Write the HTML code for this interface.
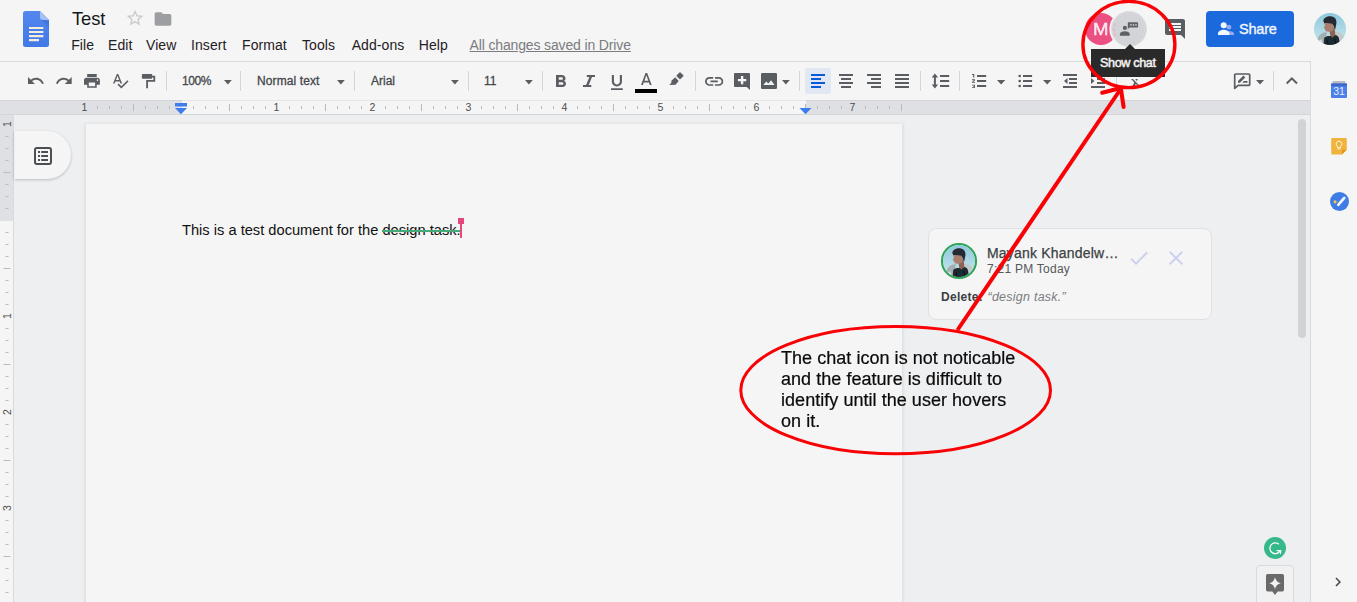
<!DOCTYPE html>
<html lang="en"><head><meta charset="utf-8"><title>Test - Google Docs</title>
<style>
*{box-sizing:border-box;margin:0;padding:0}
html,body{width:1357px;height:602px;overflow:hidden;background:#f5f5f5;font-family:"Liberation Sans",sans-serif;color:#202124}
#app{position:relative;width:1357px;height:602px;overflow:hidden}
.abs{position:absolute}
.ic{position:absolute;display:block;overflow:visible}
.t{position:absolute;white-space:nowrap;line-height:1}
.sep{position:absolute;top:71px;width:1px;height:20px;background:#d3d5d9}
.menu{font-size:14px;color:#1f2023;top:37.500px;letter-spacing:.08px}
.tb{font-size:12px;color:#44474b;top:74.500px;-webkit-text-stroke:.3px #44474b}
</style></head><body><div id="app">
<div class="abs" style="left:0;top:115px;width:1310px;height:487px;background:#eeeff1"></div>
<div class="abs" style="left:0;top:61px;width:1310px;height:1px;background:#d9dadc"></div>
<div class="abs" style="left:1310px;top:61px;width:1px;height:541px;background:#d9dadc"></div>
<svg class="ic" style="left:23px;top:11px" width="26" height="36" viewBox="0 0 26 36">
<defs><linearGradient id="lg" x1="0" y1="0" x2="0" y2="1"><stop offset="0" stop-color="#5487ee"/><stop offset="1" stop-color="#4079e6"/></linearGradient></defs>
<path d="M2.500 0H17l9 9v24.500a2.500 2.500 0 0 1-2.500 2.500h-21A2.500 2.500 0 0 1 0 33.500v-31A2.500 2.500 0 0 1 2.500 0z" fill="url(#lg)"/>
<path d="M17.500 8.500L26 9.200V16z" fill="#3a6fd6" opacity=".6"/>
<path d="M17 0l9 9h-6.500A2.500 2.500 0 0 1 17 6.500z" fill="#a4c0f6"/>
<path d="M6 16h14.400v2.100H6zM6 20h14.400v2.100H6zM6 24.100h14.400v2.100H6zM6 28.100h10v2.100H6z" fill="#f5ecdc"/>
</svg>
<div class="t" style="left:72px;top:9.700px;font-size:18.400px;letter-spacing:-.12px;color:#17181a">Test</div>
<svg class="ic" style="left:125px;top:8.2px" width="20" height="20" viewBox="0 0 24 24"><path fill="#c9cacc" d="M22 9.240l-7.190-.620L12 2 9.190 8.630 2 9.240l5.460 4.730L5.820 21 12 17.270 18.180 21l-1.630-7.030L22 9.240zM12 15.400l-3.760 2.270 1-4.280-3.320-2.880 4.380-.380L12 6.100l1.710 4.040 4.380.380-3.320 2.880 1 4.280L12 15.400z"/></svg>
<svg class="ic" style="left:153px;top:9px" width="20" height="20" viewBox="0 0 24 24"><path fill="#9d9ea1" d="M10 4H4c-1.100 0-1.990.900-1.990 2L2 18c0 1.100.900 2 2 2h16c1.100 0 2-.900 2-2V8c0-1.100-.900-2-2-2h-8l-2-2z"/></svg>
<div class="t menu" style="left:71.2px">File</div>
<div class="t menu" style="left:108px">Edit</div>
<div class="t menu" style="left:146px">View</div>
<div class="t menu" style="left:191px">Insert</div>
<div class="t menu" style="left:242px">Format</div>
<div class="t menu" style="left:302px">Tools</div>
<div class="t menu" style="left:351.7px">Add-ons</div>
<div class="t menu" style="left:418.7px">Help</div>
<div class="t menu" style="left:469.500px;color:#7a7c80;text-decoration:underline;letter-spacing:-.14px">All changes saved in Drive</div>
<svg class="ic" style="left:28px;top:77.2px" width="15.8" height="7.1" viewBox="2 7 20.47 9" preserveAspectRatio="none"><path fill="#5a5d62" d="M12.5 8c-2.65 0-5.05.99-6.9 2.6L2 7v9h9l-3.62-3.62c1.39-1.16 3.16-1.88 5.12-1.88 3.54 0 6.55 2.31 7.6 5.5l2.37-.78C21.08 11.03 17.15 8 12.5 8z"/></svg>
<svg class="ic" style="left:56.3px;top:77.2px" width="15.7" height="7.1" viewBox="1.54 7 20.46 9" preserveAspectRatio="none"><path fill="#5a5d62" d="M18.4 10.6C16.55 8.99 14.15 8 11.5 8c-4.65 0-8.58 3.03-9.96 7.22L3.9 16c1.05-3.19 4.05-5.5 7.6-5.5 1.95 0 3.73.72 5.12 1.88L13 16h9V7l-3.6 3.6z"/></svg>
<svg class="ic" style="left:83.9px;top:74.1px" width="15.9" height="13.8" viewBox="2 3 20 18" preserveAspectRatio="none"><path fill="#5a5d62" d="M19 8H5c-1.66 0-3 1.34-3 3v6h4v4h12v-4h4v-6c0-1.66-1.34-3-3-3zm-3 11H8v-5h8v5zm3-7c-.55 0-1-.45-1-1s.45-1 1-1 1 .45 1 1-.45 1-1 1zm-1-9H6v4h12V3z"/></svg>
<svg class="ic" style="left:112.8px;top:74.4px" width="15.5" height="14.4" viewBox="2.46 3 20.54 19.5" preserveAspectRatio="none"><path fill="#5a5d62" d="M12.45 16h2.09L9.43 3H7.57L2.46 16h2.09l1.12-3h5.64l1.14 3zm-6.02-5L8.5 5.48 10.57 11H6.43zm15.16.59l-8.09 8.09L9.83 16l-1.41 1.41 5.09 5.09L23 13l-1.41-1.41z"/></svg>
<svg class="ic" style="left:141px;top:73px" width="16" height="16" viewBox="141 73 16 16"><rect x="141.900" y="74.100" width="10.300" height="4.700" rx=".7" fill="#5a5d62"/><path fill="none" stroke="#5a5d62" stroke-width="1.800" d="M152 76.600h2.300v4.300h-7.200v7.300"/></svg>
<div class="sep" style="left:166px"></div>
<div class="sep" style="left:240px"></div>
<div class="sep" style="left:354px"></div>
<div class="sep" style="left:468px"></div>
<div class="sep" style="left:542px"></div>
<div class="sep" style="left:695px"></div>
<div class="sep" style="left:799px"></div>
<div class="sep" style="left:920px"></div>
<div class="sep" style="left:959px"></div>
<div class="sep" style="left:1116px"></div>
<div class="sep" style="left:1273px"></div>
<div class="t tb" style="left:182px;letter-spacing:-.45px">100%</div>
<svg class="ic" style="left:224.2px;top:80px" width="7.8" height="4.4" viewBox="0 0 10 5" preserveAspectRatio="none"><path fill="#5a5d62" d="M0 0h10L5 5z"/></svg>
<div class="t tb" style="left:257px;letter-spacing:.1px">Normal text</div>
<svg class="ic" style="left:337.2px;top:80px" width="7.8" height="4.4" viewBox="0 0 10 5" preserveAspectRatio="none"><path fill="#5a5d62" d="M0 0h10L5 5z"/></svg>
<div class="t tb" style="left:371px">Arial</div>
<svg class="ic" style="left:451.2px;top:80px" width="7.8" height="4.4" viewBox="0 0 10 5" preserveAspectRatio="none"><path fill="#5a5d62" d="M0 0h10L5 5z"/></svg>
<div class="t tb" style="left:484px">11</div>
<svg class="ic" style="left:525.2px;top:80px" width="7.8" height="4.4" viewBox="0 0 10 5" preserveAspectRatio="none"><path fill="#5a5d62" d="M0 0h10L5 5z"/></svg>
<svg class="ic" style="left:555.7px;top:75px" width="10" height="12" viewBox="7 4 10.75 14" preserveAspectRatio="none"><path fill="#5a5d62" d="M15.6 10.79c.97-.67 1.65-1.77 1.65-2.79 0-2.26-1.75-4-4-4H7v14h7.04c2.09 0 3.71-1.7 3.71-3.79 0-1.52-.86-2.82-2.15-3.42zM10 6.5h3c.83 0 1.5.67 1.5 1.5s-.67 1.5-1.5 1.5h-3v-3zm3.5 9H10v-3h3.5c.83 0 1.5.67 1.5 1.500s-.67 1.500-1.500 1.500z"/></svg>
<svg class="ic" style="left:582px;top:74px" width="14" height="14" viewBox="0 0 14 14"><path fill="#5a5d62" d="M4.800 1h8.200v2h-3l-3.300 8h2.600v2H1v-2h3.100l3.300-8H4.800z"/></svg>
<svg class="ic" style="left:611.1px;top:75px" width="11.8" height="14.9" viewBox="5 3 14 18" preserveAspectRatio="none"><path fill="#5a5d62" d="M12 17c3.31 0 6-2.69 6-6V3h-2.5v8c0 1.930-1.570 3.500-3.500 3.500S8.500 12.930 8.500 11V3H6v8c0 3.310 2.690 6 6 6zm-7 2v2h14v-2H5z"/></svg>
<svg class="ic" style="left:640.6px;top:73px" width="10.7" height="12.1" viewBox="5.5 3 12.99 14" preserveAspectRatio="none"><path fill="#5a5d62" d="M11 3L5.5 17h2.25l1.120-3h6.250l1.120 3h2.250L13 3h-2zm-1.380 9L12 5.670 14.380 12H9.620z"/></svg>
<div class="abs" style="left:635px;top:89px;width:22px;height:4px;background:#000"></div>
<svg class="ic" style="left:668px;top:71px" width="17" height="15" viewBox="668 71 17 15"><path fill="#5a5d62" d="M679.500 72.500a.7.7 0 0 1 1 0l2.800 2.800a.7.7 0 0 1 0 1l-2.800 2.800a.7.700 0 0 1-1 0l-2.800-2.800a.7.700 0 0 1 0-1zM675.200 77.300L678.700 81 675.500 84.700 669.200 84.900 671.400 82.800 671.400 80.800z"/></svg>
<svg class="ic" style="left:704.9px;top:76.6px" width="18.3" height="8.8" viewBox="2 7 20 10" preserveAspectRatio="none"><path fill="#5a5d62" d="M3.9 12c0-1.710 1.390-3.100 3.100-3.100h4V7H7c-2.760 0-5 2.240-5 5s2.240 5 5 5h4v-1.900H7c-1.710 0-3.100-1.390-3.100-3.100zM8 13h8v-2H8v2zm9-6h-4v1.900h4c1.710 0 3.100 1.390 3.100 3.100s-1.390 3.100-3.100 3.100h-4V17h4c2.760 0 5-2.240 5-5s-2.240-5-5-5z"/></svg>
<svg class="ic" style="left:734px;top:73px" width="16" height="17" viewBox="734 73 16 17"><path fill="#5a5d62" d="M735 73h14a1 1 0 0 1 1 1v15.900l-3.200-3H735a1 1 0 0 1-1-1V74a1 1 0 0 1 1-1z"/><path fill="#f5f5f5" d="M737.900 78.900h8.400v2.300h-8.400zM740.900 75.900h2.400v8.300h-2.400z"/></svg>
<svg class="ic" style="left:761px;top:73px" width="16" height="16" viewBox="761 73 16 16"><rect x="761" y="73" width="16" height="16" rx="1.200" fill="#5a5d62"/><path fill="#f5f5f5" d="M763.400 85L766.200 81.500 768.300 83.400 771.100 80.300 774.500 85z"/></svg>
<svg class="ic" style="left:782.3px;top:80px" width="7.8" height="4.4" viewBox="0 0 10 5" preserveAspectRatio="none"><path fill="#5a5d62" d="M0 0h10L5 5z"/></svg>
<div class="abs" style="left:805px;top:68px;width:26px;height:26px;background:#e1e7f3;border-radius:2px"></div>
<svg class="ic" style="left:811px;top:74px" width="14" height="14" viewBox="0 0 14 14"><rect x="0" y="0" width="14" height="2" fill="#0f5bd7"/><rect x="0" y="4" width="10" height="2" fill="#0f5bd7"/><rect x="0" y="8" width="14" height="2" fill="#0f5bd7"/><rect x="0" y="12" width="10" height="2" fill="#0f5bd7"/></svg>
<svg class="ic" style="left:839px;top:74px" width="14" height="14" viewBox="0 0 14 14"><rect x="0" y="0" width="14" height="2" fill="#5a5d62"/><rect x="2" y="4" width="10" height="2" fill="#5a5d62"/><rect x="0" y="8" width="14" height="2" fill="#5a5d62"/><rect x="2" y="12" width="10" height="2" fill="#5a5d62"/></svg>
<svg class="ic" style="left:867px;top:74px" width="14" height="14" viewBox="0 0 14 14"><rect x="0" y="0" width="14" height="2" fill="#5a5d62"/><rect x="4" y="4" width="10" height="2" fill="#5a5d62"/><rect x="0" y="8" width="14" height="2" fill="#5a5d62"/><rect x="4" y="12" width="10" height="2" fill="#5a5d62"/></svg>
<svg class="ic" style="left:895px;top:74px" width="14" height="14" viewBox="0 0 14 14"><rect x="0" y="0" width="14" height="2" fill="#5a5d62"/><rect x="0" y="4" width="14" height="2" fill="#5a5d62"/><rect x="0" y="8" width="14" height="2" fill="#5a5d62"/><rect x="0" y="12" width="14" height="2" fill="#5a5d62"/></svg>
<svg class="ic" style="left:931px;top:73px" width="8" height="16" viewBox="931 73 8 16"><path fill="#5a5d62" d="M934.900 73.600L938.100 77.500H935.900V84.500H938.100L934.900 88.400 931.700 84.500H933.900V77.500H931.700z"/></svg>
<svg class="ic" style="left:940px;top:75px" width="9.2" height="12" viewBox="0 0 9.2 12"><rect x="0" y="0" width="9.2" height="2" fill="#5a5d62"/><rect x="0" y="5" width="9.2" height="2" fill="#5a5d62"/><rect x="0" y="10" width="9.2" height="2" fill="#5a5d62"/></svg>
<svg class="ic" style="left:971.600px;top:73.800px;overflow:hidden" width="3.400" height="14.200" viewBox="2 4 3 16" preserveAspectRatio="none"><path fill="#5a5d62" d="M2 17h2v.500H3v1h1v.500H2v1h3v-4H2v1zm1-9h1V4H2v1h1v3zm-1 3h1.800L2 13.100v.900h3v-1H3.200L5 10.900V10H2v1zm5-6v2h14V5H7zm0 14h14v-2H7v2zm0-6h14v-2H7v2z"/></svg>
<svg class="ic" style="left:976.8px;top:75px" width="9.2" height="12" viewBox="0 0 9.2 12"><rect x="0" y="0" width="9.2" height="2" fill="#5a5d62"/><rect x="0" y="5" width="9.2" height="2" fill="#5a5d62"/><rect x="0" y="10" width="9.2" height="2" fill="#5a5d62"/></svg>
<svg class="ic" style="left:997px;top:80px" width="8.3" height="4.4" viewBox="0 0 10 5" preserveAspectRatio="none"><path fill="#5a5d62" d="M0 0h10L5 5z"/></svg>
<svg class="ic" style="left:1018px;top:74px" width="4" height="14" viewBox="0 0 4 14"><circle cx="1.700" cy="2" r="1.350" fill="#5a5d62"/><circle cx="1.700" cy="7" r="1.350" fill="#5a5d62"/><circle cx="1.700" cy="12" r="1.350" fill="#5a5d62"/></svg>
<svg class="ic" style="left:1023px;top:75px" width="9.1" height="12" viewBox="0 0 9.1 12"><rect x="0" y="0" width="9.1" height="2" fill="#5a5d62"/><rect x="0" y="5" width="9.1" height="2" fill="#5a5d62"/><rect x="0" y="10" width="9.1" height="2" fill="#5a5d62"/></svg>
<svg class="ic" style="left:1043.1px;top:80px" width="8.4" height="4.4" viewBox="0 0 10 5" preserveAspectRatio="none"><path fill="#5a5d62" d="M0 0h10L5 5z"/></svg>
<svg class="ic" style="left:1063px;top:74px" width="14" height="14" viewBox="0 0 14 14"><rect x="0" y="0" width="14" height="2" fill="#5a5d62"/><rect x="6" y="4" width="8" height="2" fill="#5a5d62"/><rect x="6" y="8" width="8" height="2" fill="#5a5d62"/><rect x="0" y="12" width="14" height="2" fill="#5a5d62"/></svg><svg class="ic" style="left:1063.500px;top:78px" width="3.500" height="6" viewBox="0 0 3.500 6"><path fill="#5a5d62" d="M3.500 0v6L0 3z"/></svg>
<svg class="ic" style="left:1091px;top:74px" width="14" height="14" viewBox="0 0 14 14"><rect x="0" y="0" width="14" height="2" fill="#5a5d62"/><rect x="6" y="4" width="8" height="2" fill="#5a5d62"/><rect x="6" y="8" width="8" height="2" fill="#5a5d62"/><rect x="0" y="12" width="14" height="2" fill="#5a5d62"/></svg><svg class="ic" style="left:1091px;top:78px" width="3.500" height="6" viewBox="0 0 3.500 6"><path fill="#5a5d62" d="M0 0v6l3.500-3z"/></svg>
<div class="abs" style="left:1120px;top:78.500px;width:30px;height:14px;overflow:hidden"><svg class="ic" style="left:9px;top:-2.7px" width="13.5" height="12" viewBox="2 5 18 16" preserveAspectRatio="none"><path fill="#5a5d62" d="M3.270 5L2 6.270l6.970 6.970L6.500 19h3l1.570-3.660L16.730 21 18 19.730 3.550 5.270 3.270 5zM6 5v.180L8.820 8h2.400l-.720 1.680 2.100 2.100L14.210 8H20V5H6z"/></svg></div>
<svg class="ic" style="left:1233px;top:72px" width="18" height="18" viewBox="0 0 18 18"><path fill="none" stroke="#5a5d62" stroke-width="1.700" stroke-linejoin="round" d="M2.700 2h13a1 1 0 0 1 1 1v9.400a1 1 0 0 1-1 1H5.200L1.700 16.400V3a1 1 0 0 1 1-1z"/><path fill="#5a5d62" d="M5 10.800V8.900l5.400-5.400 1.900 1.900-5.400 5.400zM9.200 10.800l1.700-1.700h3.600v1.700z"/></svg>
<svg class="ic" style="left:1256.3px;top:80px" width="8.1" height="4.4" viewBox="0 0 10 5" preserveAspectRatio="none"><path fill="#5a5d62" d="M0 0h10L5 5z"/></svg>
<svg class="ic" style="left:1286.4px;top:77.3px" width="11.7" height="7.2" viewBox="6 8 12 7.41" preserveAspectRatio="none"><path fill="#5a5d62" d="M12 8l-6 6 1.410 1.410L12 10.830l4.590 4.580L18 14z"/></svg>
<div class="abs" style="left:0;top:100px;width:1310px;height:15px;background:#dee0e3"></div>
<div class="abs" style="left:182px;top:100px;width:624px;height:15px;background:#f5f5f5"></div>
<div class="abs" style="left:0;top:114px;width:1310px;height:1px;background:#d3d5d8"></div><div class="abs" style="left:0;top:100px;width:1310px;height:1px;background:rgba(120,125,135,.12)"></div>
<svg class="ic" style="left:0;top:100px" width="1310" height="15" viewBox="0 0 1310 15"><text x="84.5" y="10.700" font-family="Liberation Sans, sans-serif" font-size="10.500" fill="#4a4d51" text-anchor="middle">1</text><rect x="97" y="6" width="1" height="3" fill="#b9bbbf"/><rect x="109" y="6" width="1" height="3" fill="#b9bbbf"/><rect x="121" y="6" width="1" height="3" fill="#b9bbbf"/><rect x="133" y="4" width="1" height="7.200" fill="#b9bbbf"/><rect x="145" y="6" width="1" height="3" fill="#b9bbbf"/><rect x="157" y="6" width="1" height="3" fill="#b9bbbf"/><rect x="169" y="6" width="1" height="3" fill="#b9bbbf"/><rect x="193" y="6" width="1" height="3" fill="#b9bbbf"/><rect x="205" y="6" width="1" height="3" fill="#b9bbbf"/><rect x="217" y="6" width="1" height="3" fill="#b9bbbf"/><rect x="229" y="4" width="1" height="7.200" fill="#b9bbbf"/><rect x="241" y="6" width="1" height="3" fill="#b9bbbf"/><rect x="253" y="6" width="1" height="3" fill="#b9bbbf"/><rect x="265" y="6" width="1" height="3" fill="#b9bbbf"/><text x="276.5" y="10.700" font-family="Liberation Sans, sans-serif" font-size="10.500" fill="#4a4d51" text-anchor="middle">1</text><rect x="289" y="6" width="1" height="3" fill="#b9bbbf"/><rect x="301" y="6" width="1" height="3" fill="#b9bbbf"/><rect x="313" y="6" width="1" height="3" fill="#b9bbbf"/><rect x="325" y="4" width="1" height="7.200" fill="#b9bbbf"/><rect x="337" y="6" width="1" height="3" fill="#b9bbbf"/><rect x="349" y="6" width="1" height="3" fill="#b9bbbf"/><rect x="361" y="6" width="1" height="3" fill="#b9bbbf"/><text x="372.5" y="10.700" font-family="Liberation Sans, sans-serif" font-size="10.500" fill="#4a4d51" text-anchor="middle">2</text><rect x="385" y="6" width="1" height="3" fill="#b9bbbf"/><rect x="397" y="6" width="1" height="3" fill="#b9bbbf"/><rect x="409" y="6" width="1" height="3" fill="#b9bbbf"/><rect x="421" y="4" width="1" height="7.200" fill="#b9bbbf"/><rect x="433" y="6" width="1" height="3" fill="#b9bbbf"/><rect x="445" y="6" width="1" height="3" fill="#b9bbbf"/><rect x="457" y="6" width="1" height="3" fill="#b9bbbf"/><text x="468.5" y="10.700" font-family="Liberation Sans, sans-serif" font-size="10.500" fill="#4a4d51" text-anchor="middle">3</text><rect x="481" y="6" width="1" height="3" fill="#b9bbbf"/><rect x="493" y="6" width="1" height="3" fill="#b9bbbf"/><rect x="505" y="6" width="1" height="3" fill="#b9bbbf"/><rect x="517" y="4" width="1" height="7.200" fill="#b9bbbf"/><rect x="529" y="6" width="1" height="3" fill="#b9bbbf"/><rect x="541" y="6" width="1" height="3" fill="#b9bbbf"/><rect x="553" y="6" width="1" height="3" fill="#b9bbbf"/><text x="564.5" y="10.700" font-family="Liberation Sans, sans-serif" font-size="10.500" fill="#4a4d51" text-anchor="middle">4</text><rect x="577" y="6" width="1" height="3" fill="#b9bbbf"/><rect x="589" y="6" width="1" height="3" fill="#b9bbbf"/><rect x="601" y="6" width="1" height="3" fill="#b9bbbf"/><rect x="613" y="4" width="1" height="7.200" fill="#b9bbbf"/><rect x="625" y="6" width="1" height="3" fill="#b9bbbf"/><rect x="637" y="6" width="1" height="3" fill="#b9bbbf"/><rect x="649" y="6" width="1" height="3" fill="#b9bbbf"/><text x="660.5" y="10.700" font-family="Liberation Sans, sans-serif" font-size="10.500" fill="#4a4d51" text-anchor="middle">5</text><rect x="673" y="6" width="1" height="3" fill="#b9bbbf"/><rect x="685" y="6" width="1" height="3" fill="#b9bbbf"/><rect x="697" y="6" width="1" height="3" fill="#b9bbbf"/><rect x="709" y="4" width="1" height="7.200" fill="#b9bbbf"/><rect x="721" y="6" width="1" height="3" fill="#b9bbbf"/><rect x="733" y="6" width="1" height="3" fill="#b9bbbf"/><rect x="745" y="6" width="1" height="3" fill="#b9bbbf"/><text x="756.5" y="10.700" font-family="Liberation Sans, sans-serif" font-size="10.500" fill="#4a4d51" text-anchor="middle">6</text><rect x="769" y="6" width="1" height="3" fill="#b9bbbf"/><rect x="781" y="6" width="1" height="3" fill="#b9bbbf"/><rect x="793" y="6" width="1" height="3" fill="#b9bbbf"/><rect x="805" y="4" width="1" height="7.200" fill="#b9bbbf"/><rect x="817" y="6" width="1" height="3" fill="#b9bbbf"/><rect x="829" y="6" width="1" height="3" fill="#b9bbbf"/><rect x="841" y="6" width="1" height="3" fill="#b9bbbf"/><text x="852.5" y="10.700" font-family="Liberation Sans, sans-serif" font-size="10.500" fill="#4a4d51" text-anchor="middle">7</text><rect x="865" y="6" width="1" height="3" fill="#b9bbbf"/><rect x="877" y="6" width="1" height="3" fill="#b9bbbf"/><rect x="889" y="6" width="1" height="3" fill="#b9bbbf"/><rect x="901" y="4" width="1" height="7.200" fill="#b9bbbf"/><path d="M175 3h12v3.600h-12zM175 8h12l-6 6.200z" fill="#3f7cf0"/><path d="M799.500 8h12l-6 6.200z" fill="#3f7cf0"/></svg>
<div class="abs" style="left:0;top:115px;width:13px;height:487px;background:#f5f5f5"></div>
<div class="abs" style="left:0;top:115px;width:13px;height:106px;background:#dee0e3"></div>
<div class="abs" style="left:13px;top:115px;width:1px;height:487px;background:#d8dadd"></div>
<svg class="ic" style="left:0;top:115px" width="14" height="487" viewBox="0 0 14 487"><text transform="translate(11,9) rotate(-90)" font-family="Liberation Sans, sans-serif" font-size="10.500" fill="#4a4d51" text-anchor="middle">1</text><rect x="5.500" y="21" width="3" height="1" fill="#b9bbbf"/><rect x="5.500" y="33" width="3" height="1" fill="#b9bbbf"/><rect x="5.500" y="45" width="3" height="1" fill="#b9bbbf"/><rect x="3.500" y="57" width="7" height="1" fill="#b9bbbf"/><rect x="5.500" y="69" width="3" height="1" fill="#b9bbbf"/><rect x="5.500" y="81" width="3" height="1" fill="#b9bbbf"/><rect x="5.500" y="93" width="3" height="1" fill="#b9bbbf"/><rect x="5.500" y="117" width="3" height="1" fill="#b9bbbf"/><rect x="5.500" y="129" width="3" height="1" fill="#b9bbbf"/><rect x="5.500" y="141" width="3" height="1" fill="#b9bbbf"/><rect x="3.500" y="153" width="7" height="1" fill="#b9bbbf"/><rect x="5.500" y="165" width="3" height="1" fill="#b9bbbf"/><rect x="5.500" y="177" width="3" height="1" fill="#b9bbbf"/><rect x="5.500" y="189" width="3" height="1" fill="#b9bbbf"/><text transform="translate(11,201) rotate(-90)" font-family="Liberation Sans, sans-serif" font-size="10.500" fill="#4a4d51" text-anchor="middle">1</text><rect x="5.500" y="213" width="3" height="1" fill="#b9bbbf"/><rect x="5.500" y="225" width="3" height="1" fill="#b9bbbf"/><rect x="5.500" y="237" width="3" height="1" fill="#b9bbbf"/><rect x="3.500" y="249" width="7" height="1" fill="#b9bbbf"/><rect x="5.500" y="261" width="3" height="1" fill="#b9bbbf"/><rect x="5.500" y="273" width="3" height="1" fill="#b9bbbf"/><rect x="5.500" y="285" width="3" height="1" fill="#b9bbbf"/><text transform="translate(11,297) rotate(-90)" font-family="Liberation Sans, sans-serif" font-size="10.500" fill="#4a4d51" text-anchor="middle">2</text><rect x="5.500" y="309" width="3" height="1" fill="#b9bbbf"/><rect x="5.500" y="321" width="3" height="1" fill="#b9bbbf"/><rect x="5.500" y="333" width="3" height="1" fill="#b9bbbf"/><rect x="3.500" y="345" width="7" height="1" fill="#b9bbbf"/><rect x="5.500" y="357" width="3" height="1" fill="#b9bbbf"/><rect x="5.500" y="369" width="3" height="1" fill="#b9bbbf"/><rect x="5.500" y="381" width="3" height="1" fill="#b9bbbf"/><text transform="translate(11,393) rotate(-90)" font-family="Liberation Sans, sans-serif" font-size="10.500" fill="#4a4d51" text-anchor="middle">3</text><rect x="5.500" y="405" width="3" height="1" fill="#b9bbbf"/><rect x="5.500" y="417" width="3" height="1" fill="#b9bbbf"/><rect x="5.500" y="429" width="3" height="1" fill="#b9bbbf"/><rect x="3.500" y="441" width="7" height="1" fill="#b9bbbf"/><rect x="5.500" y="453" width="3" height="1" fill="#b9bbbf"/><rect x="5.500" y="465" width="3" height="1" fill="#b9bbbf"/><rect x="5.500" y="477" width="3" height="1" fill="#b9bbbf"/></svg>
<div class="abs" style="left:86px;top:124px;width:816px;height:490px;background:#f5f5f5;box-shadow:0 1px 3px 1px rgba(60,64,67,.13)"></div>
<div class="t" style="left:182px;top:223px;font-size:14.670px;color:#111">This is a test document for the <span style="position:relative;display:inline-block">design task.<span style="position:absolute;left:0;right:0;top:6.500px;height:2px;background:#45aa78"></span></span></div>
<div class="abs" style="left:460px;top:219px;width:2px;height:19px;background:#e8457a"></div>
<div class="abs" style="left:458px;top:218px;width:6px;height:6px;background:#e8457a"></div>
<div class="abs" style="left:14px;top:131px;width:57px;height:48px;background:#f5f5f5;border-radius:0 24px 24px 0;box-shadow:0 1px 3px rgba(0,0,0,.22)"></div>
<div class="abs" style="left:14px;top:126px;width:1px;height:60px;background:#eeeff1"></div>
<svg class="ic" style="left:34px;top:147px" width="18" height="18" viewBox="0 0 18 18"><rect x="1" y="1" width="16" height="16" rx="1.900" fill="none" stroke="#4c4f54" stroke-width="2"/><path fill="#4c4f54" d="M4 4.100h2v1.800H4zM7.200 4.100h6.800v1.800H7.200zM4 8.100h2v1.800H4zM7.200 8.100h6.800v1.800H7.200zM4 12.100h2v1.800H4zM7.200 12.100h6.800v1.800H7.200z"/></svg>
<div class="abs" style="left:1298px;top:119px;width:8px;height:219px;background:#d2d3d7;border-radius:4px"></div>
<div class="abs" style="left:928px;top:228px;width:284px;height:92px;background:#f5f5f5;border:1px solid #e0e1e4;border-radius:8px"></div>
<svg class="ic" style="left:941px;top:242.800px" width="36" height="36" viewBox="0 0 36 36">
<defs><clipPath id="cp1"><circle cx="16" cy="16" r="16"/></clipPath><linearGradient id="sky" x1="0" y1="0" x2="0" y2="1"><stop offset="0" stop-color="#8ec8dd"/><stop offset=".6" stop-color="#b3dbe6"/><stop offset="1" stop-color="#cfe6ea"/></linearGradient>
<filter id="bl" x="-10%" y="-10%" width="120%" height="120%"><feGaussianBlur stdDeviation=".45"/></filter>
<g id="face"><g clip-path="url(#cp1)"><rect width="32" height="32" fill="url(#sky)"/><g filter="url(#bl)">
<path d="M3.500 26C5 21 9 19.300 13 19.300L12 25 11 32 4 31z" fill="#a4afb2"/><path d="M4 29l3-3 1.500 3L7 32z" fill="#d9dcda"/>
<path d="M20 19.500C24 18 28 20 30 23.500L27.500 28 25 31 22.500 24z" fill="#c3c9c8"/>
<path d="M9.500 32L10.300 24.800C12 23.300 14 22.700 16 23L21 22C23 22 24.500 23.500 25 25.500L26 32z" fill="#1e2a30"/>
<path d="M15.300 16.500L20.500 13.500 21.300 22 18.500 24.500 16.300 23z" fill="#8e6253"/>
<path d="M10.300 9.500C13 9 17 9.500 18.700 11L19.700 15.500C19.200 18 17.200 19.200 15 18.700L11.700 18.300 11 16.300 9.700 14.800 10.900 13z" fill="#a97e6d"/>
<path d="M9.300 8C9.800 4.300 14 2.800 18 3.500 21.600 4.200 23.200 7.500 22.200 11.500L21.200 16.500C20 14.500 19.700 12.200 18.200 10.700 15.200 10.200 12 9.700 10.300 10.300z" fill="#272c30"/>
<path d="M13 27l1 5M21 26l.8 6" stroke="#0f171b" stroke-width="1.200"/>
</g></g></g></defs>
<circle cx="18" cy="18" r="17" fill="none" stroke="#2ea557" stroke-width="2.200"/>
<use href="#face" x="2" y="2"/></svg>
<div class="t" style="left:987px;top:245.500px;font-size:14px;color:#3c4043;letter-spacing:.2px;-webkit-text-stroke:.25px #3c4043">Mayank Khandelw…</div>
<div class="t" style="left:987px;top:263px;font-size:12px;color:#55585c;letter-spacing:.25px">7:21 PM Today</div>
<svg class="ic" style="left:1127.2px;top:245.7px" width="24" height="24" viewBox="0 0 24 24"><path fill="#cdd1ef" d="M9 16.170L4.830 12l-1.420 1.410L9 19 21 7l-1.410-1.410z"/></svg>
<svg class="ic" style="left:1164px;top:246.2px" width="24" height="24" viewBox="0 0 24 24"><path fill="#cdd1ef" d="M19 6.410L17.590 5 12 10.590 6.410 5 5 6.410 10.590 12 5 17.590 6.410 19 12 13.410 17.590 19 19 17.590 13.410 12z"/></svg>
<div class="t" style="left:941px;top:291px;font-size:12px;color:#3c4043"><b style="letter-spacing:.3px">Delete:</b> <i style="color:#7a7d81;font-size:12.500px;letter-spacing:.25px;margin-left:1px">“design task.”</i></div>
<svg class="ic" style="left:1331px;top:81px" width="16" height="17" viewBox="0 0 16 17"><rect x="1.500" y="0" width="13" height="3" rx=".5" fill="#b9bbbf"/><rect x="0" y="2.500" width="16" height="14.500" rx="1" fill="#4a80ea"/><rect x="0" y="2.500" width="16" height="2.500" fill="#3b68c9"/><text x="8" y="14.300" font-family="Liberation Sans, sans-serif" font-size="10.500" fill="#e8effc" text-anchor="middle">31</text></svg>
<svg class="ic" style="left:1331px;top:137.500px" width="16" height="16.500" viewBox="0 0 16 17"><path d="M1 0h14a1 1 0 0 1 1 1v11l-5 5H1a1 1 0 0 1-1-1V1a1 1 0 0 1 1-1z" fill="#f0b43c"/><path d="M16 12l-5 5v-4a1 1 0 0 1 1-1z" fill="#dc981e"/><path d="M8 3.200a3 3 0 0 0-1.600 5.500v1.300h3.200V8.700A3 3 0 0 0 8 3.200z" fill="none" stroke="#fdf6e6" stroke-width="1"/><path d="M6.700 11.300h2.600" stroke="#fdf6e6" stroke-width="1"/></svg>
<svg class="ic" style="left:1330px;top:192px" width="19" height="19" viewBox="0 0 20 20"><circle cx="10" cy="10" r="10" fill="#3f7de6"/><path d="M8.700 13.500L15 6.200" stroke="#f7f9fe" stroke-width="2.800" stroke-linecap="round"/><circle cx="5.300" cy="10.300" r="1.700" fill="#f7c64a"/></svg>
<svg class="ic" style="left:1329px;top:573px" width="18" height="18" viewBox="0 0 24 24"><path fill="#45484c" d="M10 6L8.590 7.410 13.170 12l-4.580 4.590L10 18l6-6z"/></svg>
<svg class="ic" style="left:1264px;top:537px" width="22" height="22" viewBox="0 0 22 22"><circle cx="11" cy="11" r="11" fill="#36b98a"/><path d="M14.900 7.200A5.400 5.400 0 1 0 16.200 13.500" fill="none" stroke="#fbfffd" stroke-width="1.250"/><path d="M12.600 13.600H16.700L16.400 16.900" fill="none" stroke="#fbfffd" stroke-width="1.250"/></svg>
<div class="abs" style="left:1256px;top:565px;width:38px;height:42px;background:#f1f1f2;border:1px solid #d9dadd;border-radius:4px"></div>
<svg class="ic" style="left:1266px;top:574px" width="18" height="21" viewBox="0 0 18 21"><path d="M1.800 0h14.400a1.800 1.800 0 0 1 1.800 1.800v14a1.800 1.800 0 0 1-1.800 1.800h-4.500L9 20.900l-2.700-3.300H1.800a1.800 1.800 0 0 1-1.800-1.800v-14a1.800 1.800 0 0 1 1.800-1.800z" fill="#6a6a6b"/><path d="M9 3.300Q10 8.200 14.800 9.200Q10 10.200 9 15.100Q8 10.200 3.200 9.200Q8 8.200 9 3.300z" fill="#f3f3f3"/></svg>
<div class="abs" style="left:1084.500px;top:13px;width:32px;height:32px;border-radius:50%;background:#ec4f82"></div>
<div class="t" style="left:1093.300px;top:20.500px;font-size:17px;color:#fbe9ef;-webkit-text-stroke:.45px #fbe9ef;transform-origin:0 0;transform:scaleX(1.090)">M</div>
<div class="abs" style="left:1110.800px;top:10.800px;width:36.200px;height:36.200px;border-radius:50%;background:#d3d4d7;border:1px solid #dddee1;box-shadow:0 0 0 1.600px #f5f5f5"></div>
<svg class="ic" style="left:1110px;top:10px" width="38" height="38" viewBox="0 0 38 38"><circle cx="19" cy="19" r="15.600" fill="none" stroke="#dadbde" stroke-width="1" stroke-dasharray="3 2"/><path d="M5.600 26.200A15.300 15.300 0 0 1 5.600 11.800" fill="none" stroke="#f0a0bb" stroke-width="1" stroke-dasharray="3 2"/></svg>
<svg class="ic" style="left:1118px;top:21px" width="21" height="16" viewBox="0 0 21 16"><circle cx="6.900" cy="6.900" r="2.100" fill="#5d6064"/><path d="M1.900 14.800v-1.800c0-1.700 2.400-2.700 4.900-2.700s4.900 1 4.900 2.700v1.800z" fill="#5d6064"/><path d="M10.800 1.300h8.300a1 1 0 0 1 1 1v3.200a1 1 0 0 1-1 1h-7.600l-1.700 1.500V2.300a1 1 0 0 1 1-1z" fill="#5d6064"/><circle cx="13" cy="3.900" r=".8" fill="#d3d4d7"/><circle cx="15.500" cy="3.900" r=".8" fill="#d3d4d7"/><circle cx="18" cy="3.900" r=".8" fill="#d3d4d7"/></svg>
<svg class="ic" style="left:1163px;top:17px" width="24" height="24" viewBox="0 0 24 24"><path fill="#5a5d62" d="M21.990 4c0-1.100-.890-2-1.990-2H4c-1.100 0-2 .900-2 2v12c0 1.100.900 2 2 2h14l4 4-.010-18zM18 14H6v-2h12v2zm0-3H6V9h12v2zm0-3H6V6h12v2z"/></svg>
<div class="abs" style="left:1206px;top:11px;width:88px;height:36px;border-radius:4px;background:#1a6ade"></div>
<svg class="ic" style="left:1217px;top:21px" width="18" height="15" viewBox="0 0 18 15"><circle cx="11.900" cy="6.200" r="2.400" fill="#94aaec"/><path d="M11.500 10c2.600 0 5.500 1 5.500 2.800V14h-5z" fill="#94aaec"/><circle cx="6.700" cy="4.200" r="3" fill="#f3f7fe"/><path d="M1 14v-1.700c0-2.300 3.500-3.500 5.700-3.500s5.700 1.200 5.700 3.500V14z" fill="#f3f7fe"/></svg>
<div class="t" style="left:1239px;top:21.500px;font-size:14.500px;color:#f1f5fd;letter-spacing:-.22px;-webkit-text-stroke:.35px #f1f5fd">Share</div>
<svg class="ic" style="left:1314px;top:13px" width="32" height="32" viewBox="0 0 32 32"><use href="#face"/></svg>
<div class="abs" style="left:1091px;top:49px;width:74px;height:27.500px;background:#2a2a2a"></div>
<div class="abs" style="left:1125.200px;top:44px;width:0;height:0;border-left:5px solid transparent;border-right:5px solid transparent;border-bottom:5px solid #2a2a2a"></div>
<div class="t" style="left:1100px;top:56.500px;font-size:12.600px;color:#f1f1f1;-webkit-text-stroke:.5px #f1f1f1;letter-spacing:-.36px">Show chat</div>
<svg class="ic" style="left:0;top:0" width="1357" height="602" viewBox="0 0 1357 602">
<ellipse cx="1128.900" cy="44.500" rx="46" ry="43.100" fill="none" stroke="#f90206" stroke-width="3.400"/>
<path d="M957.500 330L1121 88.500" stroke="#f90206" stroke-width="4" fill="none"/>
<path d="M1102.200 92.700L1120.800 88L1123.600 107" stroke="#f90206" stroke-width="4.100" fill="none" stroke-linecap="round" stroke-linejoin="round"/>
<ellipse cx="895.650" cy="390.150" rx="154.850" ry="63.650" fill="none" stroke="#f90206" stroke-width="3"/>
</svg>
<div class="abs" style="left:781px;top:348px;font-size:18px;line-height:21px;color:#0b0b0b;white-space:nowrap;letter-spacing:.04px;-webkit-text-stroke:.22px #0b0b0b;will-change:transform">The chat icon is not noticable<br>and the feature is difficult to<br>identify until the user hovers<br>on it.</div>
</div></body></html>
